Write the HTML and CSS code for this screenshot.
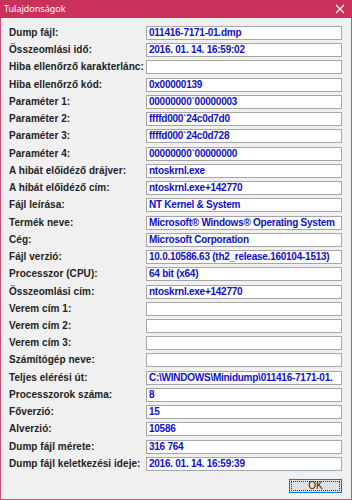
FILE: index.html
```html
<!DOCTYPE html>
<html lang="hu">
<head>
<meta charset="utf-8">
<title>Tulajdonságok</title>
<link rel="stylesheet" href="styles.css">
</head>
<body>
<div class="window">
  <div class="titlebar">
    <span class="title">Tulajdonságok</span>
    <svg class="close" width="10" height="10" viewBox="0 0 10 10"><path d="M1 1 L9 9 M9 1 L1 9" stroke="#fff" stroke-width="1.1" fill="none"/></svg>
  </div>
  <div class="content">
    <div class="rows">
      <div class="label">Dump fájl:</div><div class="field">011416-7171-01.dmp</div>
      <div class="label">Összeomlási idő:</div><div class="field">2016. 01. 14. 16:59:02</div>
      <div class="label">Hiba ellenőrző karakterlánc:</div><div class="field"></div>
      <div class="label">Hiba ellenőrző kód:</div><div class="field">0x00000139</div>
      <div class="label">Paraméter 1:</div><div class="field">00000000`00000003</div>
      <div class="label">Paraméter 2:</div><div class="field">ffffd000`24c0d7d0</div>
      <div class="label">Paraméter 3:</div><div class="field">ffffd000`24c0d728</div>
      <div class="label">Paraméter 4:</div><div class="field">00000000`00000000</div>
      <div class="label">A hibát előidéző drájver:</div><div class="field">ntoskrnl.exe</div>
      <div class="label">A hibát előidéző cím:</div><div class="field">ntoskrnl.exe+142770</div>
      <div class="label">Fájl leírása:</div><div class="field">NT Kernel &amp; System</div>
      <div class="label">Termék neve:</div><div class="field">Microsoft® Windows® Operating System</div>
      <div class="label">Cég:</div><div class="field">Microsoft Corporation</div>
      <div class="label">Fájl verzió:</div><div class="field">10.0.10586.63 (th2_release.160104-1513)</div>
      <div class="label">Processzor (CPU):</div><div class="field">64 bit (x64)</div>
      <div class="label">Összeomlási cím:</div><div class="field">ntoskrnl.exe+142770</div>
      <div class="label">Verem cím 1:</div><div class="field"></div>
      <div class="label">Verem cím 2:</div><div class="field"></div>
      <div class="label">Verem cím 3:</div><div class="field"></div>
      <div class="label">Számítógép neve:</div><div class="field"></div>
      <div class="label">Teljes elérési út:</div><div class="field">C:\WINDOWS\Minidump\011416-7171-01.</div>
      <div class="label">Processzorok száma:</div><div class="field">8</div>
      <div class="label">Főverzió:</div><div class="field">15</div>
      <div class="label">Alverzió:</div><div class="field">10586</div>
      <div class="label">Dump fájl mérete:</div><div class="field">316 764</div>
      <div class="label">Dump fájl keletkezési ideje:</div><div class="field">2016. 01. 14. 16:59:39</div>
    </div>
    <div class="buttons">
      <button class="ok"><span class="focus">OK</span></button>
    </div>
  </div>
</div>
</body>
</html>
```
FILE: styles.css
```css
html, body {
  margin: 0;
  padding: 0;
  background: #f0f0f0;
}
.window {
  width: 352px;
  height: 500px;
  box-sizing: border-box;
  border: 1px solid #cf4f76;
  border-top: none;
  background: #f0f0f0;
  display: flex;
  flex-direction: column;
  font-family: "Liberation Sans", Arial, sans-serif;
}
.titlebar {
  height: 18px;
  margin: 0 -1px;
  background: #c9305a;
  display: flex;
  align-items: center;
  justify-content: space-between;
  padding: 0 7px 0 4px;
  color: #fff;
}
.title {
  font-family: "Noto Sans", "Liberation Sans", sans-serif;
  font-size: 9px;
  line-height: 18px;
}
.close {
  display: block;
}
.content {
  padding: 8px 9px 0 8px;
  display: flex;
  flex-direction: column;
}
.rows {
  display: grid;
  grid-template-columns: 137px 196px;
  grid-auto-rows: 14px;
  row-gap: 3.24px;
}
.label {
  font-size: 10px;
  font-weight: bold;
  color: #222;
  line-height: 14px;
  white-space: nowrap;
  letter-spacing: 0.05px;
}
.field {
  box-sizing: border-box;
  height: 14px;
  border: 1px solid #a6a6a6;
  background: #fff;
  padding: 0 2px;
  font-size: 10px;
  font-weight: bold;
  color: #1010c8;
  line-height: 12px;
  white-space: nowrap;
  overflow: hidden;
  letter-spacing: -0.25px;
}
.buttons {
  display: flex;
  justify-content: flex-end;
  margin-top: 8px;
}
.ok {
  width: 53px;
  height: 14px;
  box-sizing: border-box;
  border: 1px solid #0078d7;
  background: #e1e1e1;
  padding: 1px;
  margin: 0;
  display: flex;
}
.focus {
  flex: 1;
  border: 1px dotted #333;
  font-family: "Liberation Sans", Arial, sans-serif;
  font-size: 10px;
  color: #222;
  line-height: 8px;
  text-align: center;
}
```
